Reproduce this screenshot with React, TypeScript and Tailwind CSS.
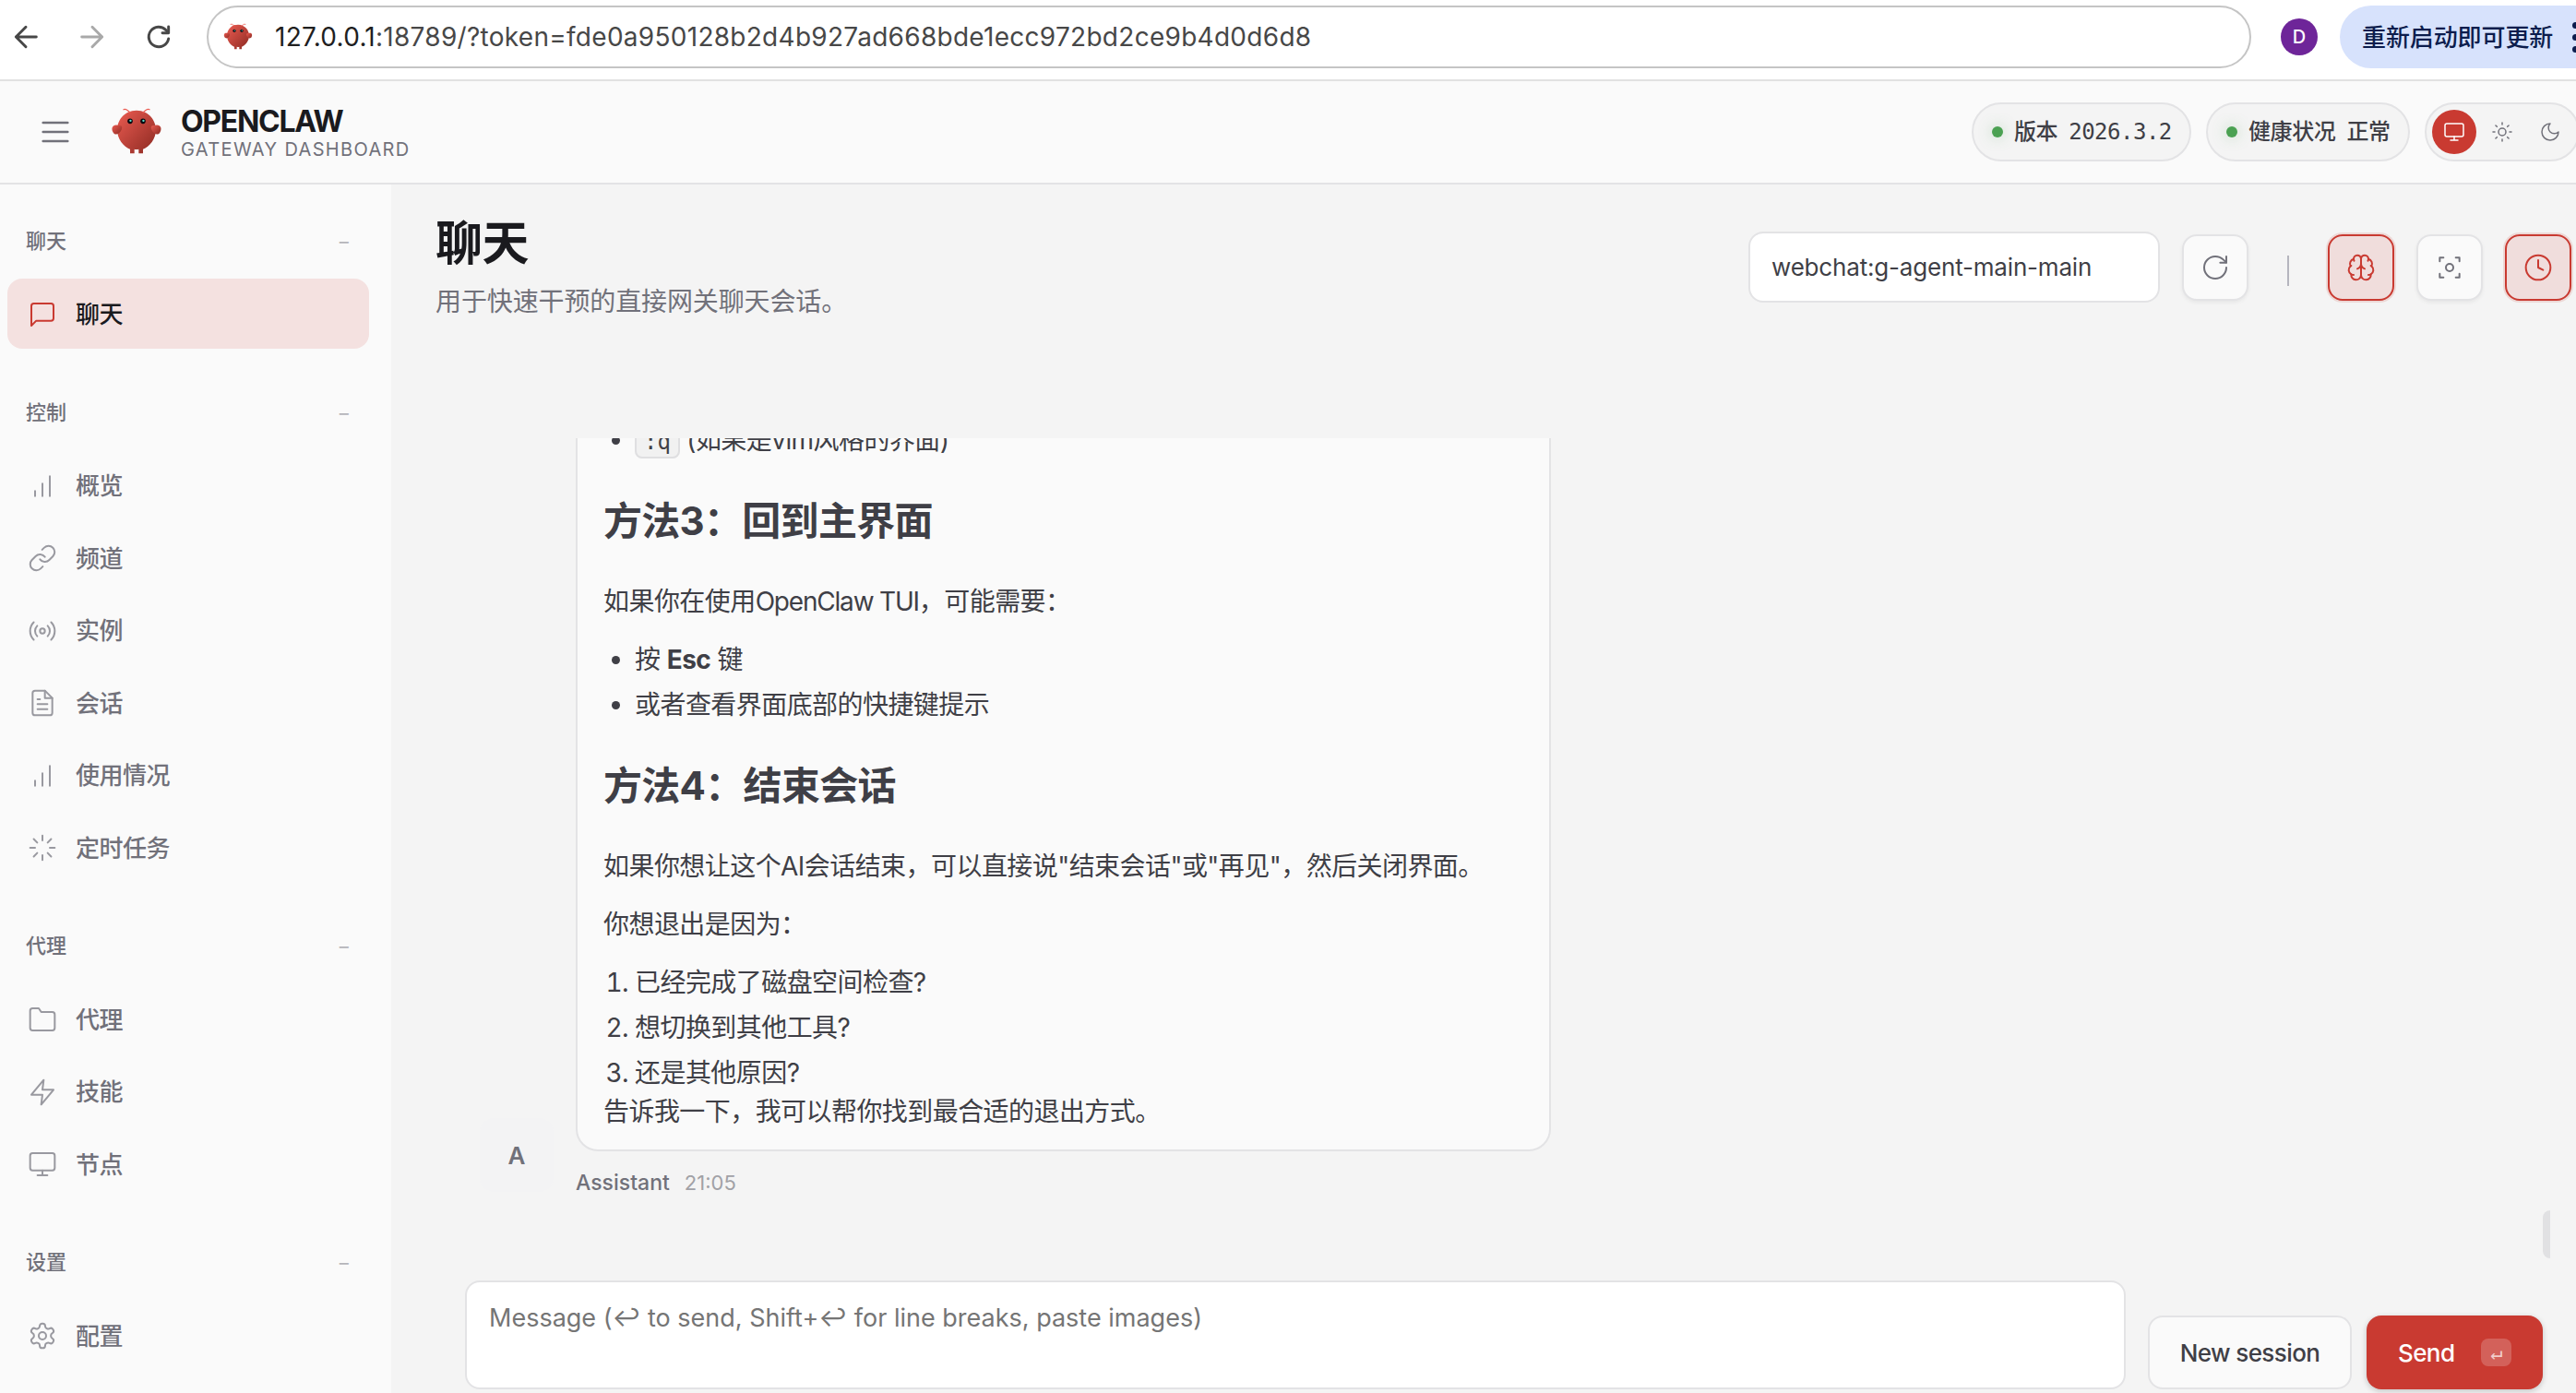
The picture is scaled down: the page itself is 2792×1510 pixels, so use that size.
import type { ReactNode } from "react";
import clsx from "clsx";

interface IconProps {
  children: ReactNode;
  className?: string;
  strokeWidth?: number;
}

function Icon({ children, className = "size-8", strokeWidth = 1.5 }: IconProps) {
  return (
    <svg
      viewBox="0 0 24 24"
      fill="none"
      stroke="currentColor"
      strokeWidth={strokeWidth}
      strokeLinecap="round"
      strokeLinejoin="round"
      className={clsx("shrink-0", className)}
    >
      {children}
    </svg>
  );
}

const icons = {
  message: (
    <path d="M21 15a2 2 0 0 1-2 2H7l-4 4V5a2 2 0 0 1 2-2h14a2 2 0 0 1 2 2z" />
  ),
  bars: <path d="M12 20V10M18 20V4M6 20v-4" />,
  link: (
    <>
      <path d="M10 13a5 5 0 0 0 7.54.54l3-3a5 5 0 0 0-7.07-7.07l-1.72 1.71" />
      <path d="M14 11a5 5 0 0 0-7.54-.54l-3 3a5 5 0 0 0 7.07 7.07l1.71-1.71" />
    </>
  ),
  radio: (
    <>
      <circle cx="12" cy="12" r="2" />
      <path d="M16.24 7.76a6 6 0 0 1 0 8.49m-8.48-.01a6 6 0 0 1 0-8.49m11.31-2.82a10 10 0 0 1 0 14.14m-14.14 0a10 10 0 0 1 0-14.14" />
    </>
  ),
  file: (
    <>
      <path d="M14 2H6a2 2 0 0 0-2 2v16a2 2 0 0 0 2 2h12a2 2 0 0 0 2-2V8z" />
      <path d="M14 2v6h6M16 13H8M16 17H8M10 9H8" />
    </>
  ),
  loader: (
    <path d="M12 2v4M12 18v4M4.93 4.93l2.83 2.83M16.24 16.24l2.83 2.83M2 12h4M18 12h4M4.93 19.07l2.83-2.83M16.24 7.76l2.83-2.83" />
  ),
  folder: (
    <path d="M22 19a2 2 0 0 1-2 2H4a2 2 0 0 1-2-2V5a2 2 0 0 1 2-2h5l2 3h9a2 2 0 0 1 2 2z" />
  ),
  zap: <path d="M13 2 3 14h9l-1 8 10-12h-9l1-8z" />,
  monitor: (
    <>
      <rect x="2" y="3" width="20" height="14" rx="2" />
      <path d="M8 21h8M12 17v4" />
    </>
  ),
  settings: (
    <>
      <path d="M12.22 2h-.44a2 2 0 0 0-2 2v.18a2 2 0 0 1-1 1.73l-.43.25a2 2 0 0 1-2 0l-.15-.08a2 2 0 0 0-2.73.73l-.22.38a2 2 0 0 0 .73 2.73l.15.1a2 2 0 0 1 1 1.72v.51a2 2 0 0 1-1 1.74l-.15.09a2 2 0 0 0-.73 2.73l.22.38a2 2 0 0 0 2.73.73l.15-.08a2 2 0 0 1 2 0l.43.25a2 2 0 0 1 1 1.73V20a2 2 0 0 0 2 2h.44a2 2 0 0 0 2-2v-.18a2 2 0 0 1 1-1.73l.43-.25a2 2 0 0 1 2 0l.15.08a2 2 0 0 0 2.73-.73l.22-.39a2 2 0 0 0-.73-2.73l-.15-.08a2 2 0 0 1-1-1.74v-.5a2 2 0 0 1 1-1.74l.15-.09a2 2 0 0 0 .73-2.73l-.22-.38a2 2 0 0 0-2.73-.73l-.15.08a2 2 0 0 1-2 0l-.43-.25a2 2 0 0 1-1-1.73V4a2 2 0 0 0-2-2z" />
      <circle cx="12" cy="12" r="3" />
    </>
  ),
  menu: <path d="M4 6h16M4 12h16M4 18h16" />,
  sun: (
    <>
      <circle cx="12" cy="12" r="4" />
      <path d="M12 2v2M12 20v2M4.93 4.93l1.41 1.41M17.66 17.66l1.41 1.41M2 12h2M20 12h2M6.34 17.66l-1.41 1.41M19.07 4.93l-1.41 1.41" />
    </>
  ),
  moon: <path d="M12 3a6 6 0 0 0 9 9 9 9 0 1 1-9-9Z" />,
  refresh: (
    <>
      <path d="M21 12a9 9 0 1 1-9-9c2.52 0 4.93 1 6.74 2.74L21 8" />
      <path d="M21 3v5h-5" />
    </>
  ),
  brain: (
    <>
      <path d="M12 5a3 3 0 1 0-5.997.125 4 4 0 0 0-2.526 5.77 4 4 0 0 0 .556 6.588A4 4 0 1 0 12 18Z" />
      <path d="M12 5a3 3 0 1 1 5.997.125 4 4 0 0 1 2.526 5.77 4 4 0 0 1-.556 6.588A4 4 0 1 1 12 18Z" />
      <path d="M15 13a4.5 4.5 0 0 1-3-4 4.5 4.5 0 0 1-3 4" />
      <path d="M17.599 6.5a3 3 0 0 0 .399-1.375M6.003 5.125A3 3 0 0 0 6.401 6.5M3.477 10.896a4 4 0 0 1 .585-.396M19.938 10.5a4 4 0 0 1 .585.396M6 18a4 4 0 0 1-1.967-.516M19.967 17.484A4 4 0 0 1 18 18" />
    </>
  ),
  focus: (
    <>
      <path d="M4 7V4h3M20 7V4h-3M4 17v3h3M20 17v3h-3" />
      <circle cx="12" cy="12" r="3" />
    </>
  ),
  clock: (
    <>
      <circle cx="12" cy="12" r="10" />
      <path d="M12 6v6l4 2" />
    </>
  ),
};

type IconName = keyof typeof icons;

interface NavGroup {
  title: string;
  items: { label: string; icon: IconName; active?: boolean }[];
}

const navGroups: NavGroup[] = [
  { title: "聊天", items: [{ label: "聊天", icon: "message", active: true }] },
  {
    title: "控制",
    items: [
      { label: "概览", icon: "bars" },
      { label: "频道", icon: "link" },
      { label: "实例", icon: "radio" },
      { label: "会话", icon: "file" },
      { label: "使用情况", icon: "bars" },
      { label: "定时任务", icon: "loader" },
    ],
  },
  {
    title: "代理",
    items: [
      { label: "代理", icon: "folder" },
      { label: "技能", icon: "zap" },
      { label: "节点", icon: "monitor" },
    ],
  },
  { title: "设置", items: [{ label: "配置", icon: "settings" }] },
];

function Logo({ className, id }: { className: string; id: string }) {
  const fill = `url(#${id})`;
  return (
    <svg viewBox="0 0 120 120" fill="none" className={clsx("shrink-0", className)}>
      <defs>
        <linearGradient id={id} x1="0%" y1="0%" x2="100%" y2="100%">
          <stop offset="0%" stopColor="#eb5b51" />
          <stop offset="100%" stopColor="#8c2a22" />
        </linearGradient>
      </defs>
      <path
        d="M60 10C30 10 15 35 15 55c0 20 15 40 30 45v10h10v-10s5 2 10 0v10h10v-10c15-5 30-25 30-45 0-20-15-45-45-45Z"
        fill={fill}
      />
      <path d="M20 45C5 40 0 50 5 60s15 5 20-5c3-7 0-10-5-10Z" fill={fill} />
      <path d="M100 45c15-5 20 5 15 15s-15 5-20-5c-3-7 0-10 5-10Z" fill={fill} />
      <path
        d="M45 15Q35 5 30 8M75 15Q85 5 90 8"
        stroke="#eb5b51"
        strokeWidth="3"
        strokeLinecap="round"
      />
      <circle cx="45" cy="35" r="6" fill="#070810" />
      <circle cx="75" cy="35" r="6" fill="#070810" />
      <circle cx="46" cy="34" r="2.5" fill="#5ce2cd" />
      <circle cx="76" cy="34" r="2.5" fill="#5ce2cd" />
    </svg>
  );
}

function BrowserBar() {
  return (
    <div className="flex h-[88px] shrink-0 items-center border-b-2 border-[#e1e1e1] bg-white pb-1.5 pl-3">
      <Icon className="size-8 text-[#474747]" strokeWidth={2.2}>
        <path d="M20.5 12H4M12 4l-8 8 8 8" />
      </Icon>
      <Icon className="ml-10 size-8 text-[#a9a9a9]" strokeWidth={2.2}>
        <path d="M3.5 12H20M12 4l8 8-8 8" />
      </Icon>
      <Icon className="ml-10 size-8 text-[#474747]" strokeWidth={2.2}>
        <path d="M20 13.5A8.1 8.1 0 1 1 18 6.5l1.5 1.8" />
        <path d="M20 3.8v5h-5" />
      </Icon>
      <div className="ml-[36px] flex h-[68px] w-[2216px] shrink-0 items-center rounded-full border-2 border-[#c5c5c5] pl-4">
        <Logo className="size-8" id="favicon" />
        <span className="ml-6 text-[28px] tracking-[0.28px] whitespace-nowrap text-[#474747]">
          <span className="text-[#1f1f1f]">127.0.0.1</span>
          :18789/?token=fde0a950128b2d4b927ad668bde1ecc972bd2ce9b4d0d6d8
        </span>
      </div>
      <div className="ml-8 flex size-10 shrink-0 items-center justify-center rounded-full bg-[#6e2599] text-xl font-medium text-white">
        D
      </div>
      <div className="ml-6 flex h-[68px] w-[300px] shrink-0 items-center rounded-l-full bg-[#d7e2fc] pl-6 text-[26px] font-medium tracking-[-0.1px] whitespace-nowrap text-[#0c1d4d]">
        重新启动即可更新
        <span className="ml-[21px] flex flex-col gap-1.5">
          <i className="size-[7px] rounded-full bg-[#0c1d4d]" />
          <i className="size-[7px] rounded-full bg-[#0c1d4d]" />
          <i className="size-[7px] rounded-full bg-[#0c1d4d]" />
        </span>
      </div>
    </div>
  );
}

function StatusPill({ children, className }: { children: ReactNode; className: string }) {
  return (
    <div
      className={clsx(
        "flex h-16 shrink-0 items-center rounded-full border-2 border-[#e3e3e5] bg-[#f4f4f4] pl-5 text-2xl font-medium tracking-[-0.4px] whitespace-nowrap text-[#3f3f46]",
        className,
      )}
    >
      <i className="mr-3 size-3 rounded-full bg-[#4ba152] shadow-[0_0_16px_rgba(75,161,82,0.35)]" />
      {children}
    </div>
  );
}

function Topbar() {
  return (
    <header className="flex h-[112px] shrink-0 items-center border-b-2 border-[#e3e3e5] bg-[#fafafa] pl-10">
      <Icon className="size-10 text-[#71717a]">{icons.menu}</Icon>
      <Logo className="ml-10 size-14" id="brand" />
      <div className="ml-5 flex w-[400px] flex-col pt-0.5">
        <span className="text-[32px] leading-[36px] font-bold tracking-[-1.3px] text-[#1a1a1e]">
          OPENCLAW
        </span>
        <span className="text-xl leading-6 tracking-[1.35px] text-[#71717a]">
          GATEWAY DASHBOARD
        </span>
      </div>
      <div className="ml-auto flex w-[655px] shrink-0 gap-4">
        <StatusPill className="w-[238px]">
          版本
          <span className="ml-3 font-['DejaVu_Sans_Mono',monospace] font-normal tracking-[-0.5px]">
            2026.3.2
          </span>
        </StatusPill>
        <StatusPill className="w-[221px]">
          健康状况<span className="ml-3">正常</span>
        </StatusPill>
        <div className="flex h-16 shrink-0 items-center gap-1 rounded-full border-2 border-[#e3e3e5] bg-[#f4f4f4] px-1.5 text-[#71717a]">
          <span className="flex size-12 items-center justify-center rounded-full bg-[#c93a31] text-white">
            <Icon className="size-6">{icons.monitor}</Icon>
          </span>
          <span className="flex size-12 items-center justify-center">
            <Icon className="size-6">{icons.sun}</Icon>
          </span>
          <span className="flex size-12 items-center justify-center">
            <Icon className="size-6">{icons.moon}</Icon>
          </span>
        </div>
      </div>
    </header>
  );
}

function Sidebar() {
  return (
    <nav className="flex w-[424px] shrink-0 flex-col gap-[45px] overflow-hidden bg-[#fafafa] pt-[37px] pr-6 pl-2">
      {navGroups.map((group) => (
        <div key={group.title}>
          <div className="mb-[17px] flex h-12 items-center justify-between pr-5 pl-5 text-[22px] font-medium text-[#71717a]">
            {group.title}
            <span className="font-normal text-[#b4b4b9]">−</span>
          </div>
          <div className="flex flex-col gap-[2.5px]">
            {group.items.map((item) => (
              <a
                key={item.label}
                className={clsx(
                  "flex h-[76px] items-center gap-5 rounded-2xl pt-px pl-[22px] text-[26px] font-medium tracking-[-0.5px]",
                  item.active ? "bg-[#f4e1e0] text-[#1a1a1e]" : "text-[#71717a]",
                )}
              >
                <Icon
                  className={clsx("size-8", item.active ? "text-[#c93a31]" : "opacity-70")}
                >
                  {icons[item.icon]}
                </Icon>
                {item.label}
              </a>
            ))}
          </div>
        </div>
      ))}
    </nav>
  );
}

function ToolButton({ icon, active }: { icon: IconName; active?: boolean }) {
  return (
    <button
      className={clsx(
        "flex size-[72px] shrink-0 items-center justify-center rounded-2xl border-2",
        active
          ? "border-[#c93a31] bg-[#f0dddc] text-[#c93a31] shadow-[0_0_0_2px_rgba(201,58,49,0.15)]"
          : "border-[#e3e3e5] bg-[#fafafa] text-[#71717a] shadow-[0_2px_4px_rgba(0,0,0,0.06)]",
      )}
    >
      <Icon>{icons[icon]}</Icon>
    </button>
  );
}

function ChatHeader() {
  return (
    <div className="flex h-[200px] shrink-0 pt-[34px] pl-12">
      <div className="flex flex-col">
        <h1 className="text-[51px] leading-[60px] font-bold tracking-[-0.5px] text-[#1a1a1e]">
          聊天
        </h1>
        <p className="mt-3 text-[28px] leading-[42px] tracking-[-0.12px] text-[#71717a]">
          用于快速干预的直接网关聊天会话。
        </p>
      </div>
      <div className="mt-4 ml-auto flex h-20 w-[897px] shrink-0 items-center">
        <div className="mb-px flex h-[77px] w-[446px] shrink-0 items-center rounded-2xl border-2 border-[#e3e3e5] bg-white pl-[23px] text-[26px] tracking-[-0.18px] text-[#3f3f46]">
          webchat:g-agent-main-main
        </div>
        <div className="ml-6 flex shrink-0 items-center gap-6">
          <ToolButton icon="refresh" />
          <span className="mx-[18px] mt-[7px] h-[33px] w-[2px] bg-[#b5b5be]" />
          <ToolButton icon="brain" active />
          <ToolButton icon="focus" />
          <ToolButton icon="clock" active />
        </div>
      </div>
    </div>
  );
}

function AssistantMessage() {
  return (
    <div className="flex items-end gap-6 pl-[96px]">
      <div className="mb-2 flex size-20 shrink-0 items-center justify-center rounded-2xl bg-[#f3f3f4] text-[26px] font-semibold text-[#71717a]">
        A
      </div>
      <div className="flex flex-col">
        <div className="w-[1057px] rounded-3xl border-2 border-[#e3e3e5] bg-[#fafafa] px-7 py-5 text-[28px] leading-[42px] tracking-[-0.56px] text-[#3f3f46]">
          <ul className="list-disc pl-[34px]">
            <li>
              <code className="rounded-lg border-2 border-[#dfdfe1] bg-[#f1f1f1] px-2 py-0.5 font-['DejaVu_Sans_Mono',monospace] text-2xl tracking-normal">
                :q
              </code>{" "}
              (如果是vim风格的界面)
            </li>
          </ul>
          <h2 className="my-[35px] text-[42px] leading-[63px] font-bold tracking-[-0.7px]">
            方法3：回到主界面
          </h2>
          <p className="mb-[21px]">
            如果你在使用<span className="tracking-[-1.2px]">OpenClaw TUI</span>
            ，可能需要：
          </p>
          <ul className="flex list-disc flex-col gap-[7px] pl-[34px]">
            <li>
              按 <strong>Esc</strong> 键
            </li>
            <li>或者查看界面底部的快捷键提示</li>
          </ul>
          <h2 className="my-[35px] text-[42px] leading-[63px] font-bold tracking-[-0.7px]">
            方法4：结束会话
          </h2>
          <p className="mb-[21px]">
            如果你想让这个AI会话结束，可以直接说"结束会话"或"再见"，然后关闭界面。
          </p>
          <p className="mb-[21px]">你想退出是因为：</p>
          <ol className="flex list-decimal flex-col gap-[7px] pl-[34px]">
            <li>已经完成了磁盘空间检查?</li>
            <li>想切换到其他工具?</li>
            <li>还是其他原因?</li>
          </ol>
          <p>告诉我一下，我可以帮你找到最合适的退出方式。</p>
        </div>
        <div className="mt-4 flex h-[36px] items-center gap-4 text-[22px] text-[#a1a1a6]">
          <span className="text-[23px] font-medium text-[#71717a]">Assistant</span>
          21:05
        </div>
      </div>
    </div>
  );
}

function Composer() {
  return (
    <div className="flex h-[122px] shrink-0 items-end pb-1 pl-20">
      <div className="h-[118px] w-[1800px] shrink-0 rounded-2xl border-2 border-[#e3e3e5] bg-white px-6 pt-[18px] text-[27px] leading-[42px] text-[#757575]">
        Message (↩ to send, Shift+↩ for line breaks, paste images)
      </div>
      <button className="ml-6 h-20 w-[221px] shrink-0 rounded-2xl border-2 border-[#e3e3e5] bg-[#fafafa] text-[26px] font-medium tracking-[-0.6px] text-[#3f3f46]">
        New session
      </button>
      <button className="ml-4 flex h-20 w-[191px] shrink-0 items-center justify-between rounded-2xl bg-[#c93a31] pr-[34px] pl-[34px] text-[26px] font-medium tracking-[-0.6px] text-white shadow-[0_2px_6px_rgba(0,0,0,0.2)]">
        Send
        <kbd className="flex h-[30px] w-[33px] items-center justify-center rounded-lg bg-white/20 font-['DejaVu_Sans_Mono',monospace] text-[22px] text-white/70">
          ↵
        </kbd>
      </button>
    </div>
  );
}

export default function App() {
  return (
    <div className="flex h-[1510px] w-[2792px] flex-col overflow-hidden bg-[#f4f4f4] font-[Inter,'Noto_Sans_CJK_SC',sans-serif]">
      <BrowserBar />
      <Topbar />
      <div className="flex min-h-0 flex-1">
        <Sidebar />
        <main className="flex min-w-0 flex-1 flex-col">
          <ChatHeader />
          <section className="mt-[75px] flex min-h-0 flex-1 flex-col justify-end overflow-hidden pb-[88px]">
            <AssistantMessage />
          </section>
          <div className="relative">
            {/* collapsed scroll thumb, floats above the composer */}
            <div className="absolute -top-[76px] right-7 h-[52px] w-2 rounded-l-full bg-[#e1e1e3]" />
            <Composer />
          </div>
        </main>
      </div>
    </div>
  );
}
